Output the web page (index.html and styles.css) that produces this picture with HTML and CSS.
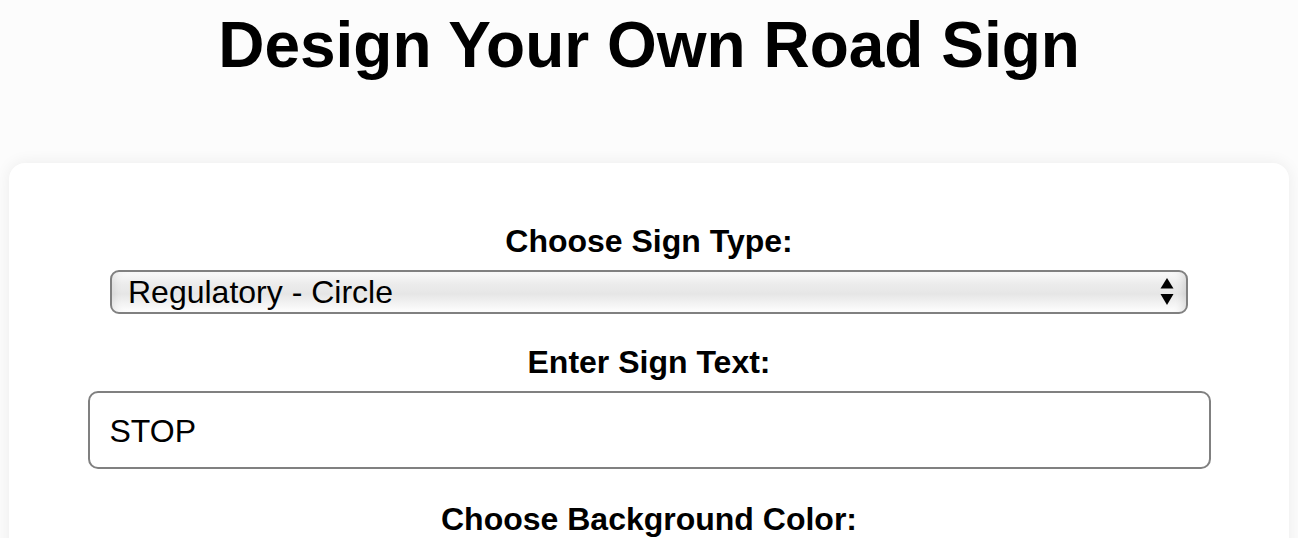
FILE: index.html
```html
<!DOCTYPE html>
<html lang="en">
<head>
<meta charset="utf-8">
<title>Design Your Own Road Sign</title>
<link rel="stylesheet" href="styles.css">
</head>
<body>
<h1 class="title">Design Your Own Road Sign</h1>
<div class="card">
  <label class="field-label" for="type">Choose Sign Type:</label>
  <div class="select-wrap">
    <select id="type" class="select">
      <option>Regulatory - Circle</option>
      <option>Warning - Triangle</option>
      <option>Information - Rectangle</option>
    </select>
    <svg class="arrows" width="14" height="28" viewBox="0 0 14 28" aria-hidden="true">
      <path d="M7 0 L13.5 10.5 L0.5 10.5 Z" fill="#000"/>
      <path d="M0.5 16 L13.5 16 L7 27 Z" fill="#000"/>
    </svg>
  </div>
  <label class="field-label" for="text">Enter Sign Text:</label>
  <input id="text" class="text-input" type="text" value="STOP">
  <label class="field-label" for="bg">Choose Background Color:</label>
</div>
</body>
</html>
```
FILE: styles.css
```css
html, body {
  margin: 0;
  padding: 0;
}
body {
  background: #fcfcfc;
  font-family: "Liberation Sans", Arial, Helvetica, sans-serif;
  color: #000;
  padding: 8px 9px 0;
}
.title {
  margin: 0;
  font-size: 64px;
  line-height: 74px;
  font-weight: bold;
  text-align: center;
}
.card {
  margin-top: 81px;
  background: #fff;
  border-radius: 16px;
  box-shadow: 0 0 16px rgba(0, 0, 0, 0.07);
  padding: 60px 0 40px;
  display: flex;
  flex-direction: column;
  align-items: center;
}
.field-label {
  display: block;
  font-size: 32px;
  line-height: 36px;
  font-weight: bold;
  text-align: center;
  margin-bottom: 11px;
}
.select-wrap {
  position: relative;
  width: 1078px;
  margin-bottom: 30px;
}
.select {
  display: block;
  width: 100%;
  height: 44px;
  box-sizing: border-box;
  -webkit-appearance: none;
  appearance: none;
  border: 2px solid #808080;
  border-radius: 9px;
  background: linear-gradient(to bottom, #fafafa 0%, #ececec 30%, #e6e6e6 55%, #f6f6f6 85%, #ffffff 100%);
  box-shadow: inset -8px 0 8px -6px rgba(0,0,0,0.12), inset 8px 0 8px -6px rgba(0,0,0,0.08);
  font-family: "Liberation Sans", Arial, Helvetica, sans-serif;
  font-size: 32px;
  color: #000;
  padding: 0 40px 0 16px;
  line-height: 40px;
  outline: none;
}
.arrows {
  position: absolute;
  right: 14px;
  top: 8px;
  pointer-events: none;
}
.text-input {
  display: block;
  width: 1123px;
  height: 78px;
  box-sizing: border-box;
  border: 2px solid #808080;
  border-radius: 10px;
  padding: 3px 20px 0;
  font-family: "Liberation Sans", Arial, Helvetica, sans-serif;
  font-size: 32px;
  color: #000;
  background: #fff;
  margin-bottom: 32px;
  outline: none;
}
```
